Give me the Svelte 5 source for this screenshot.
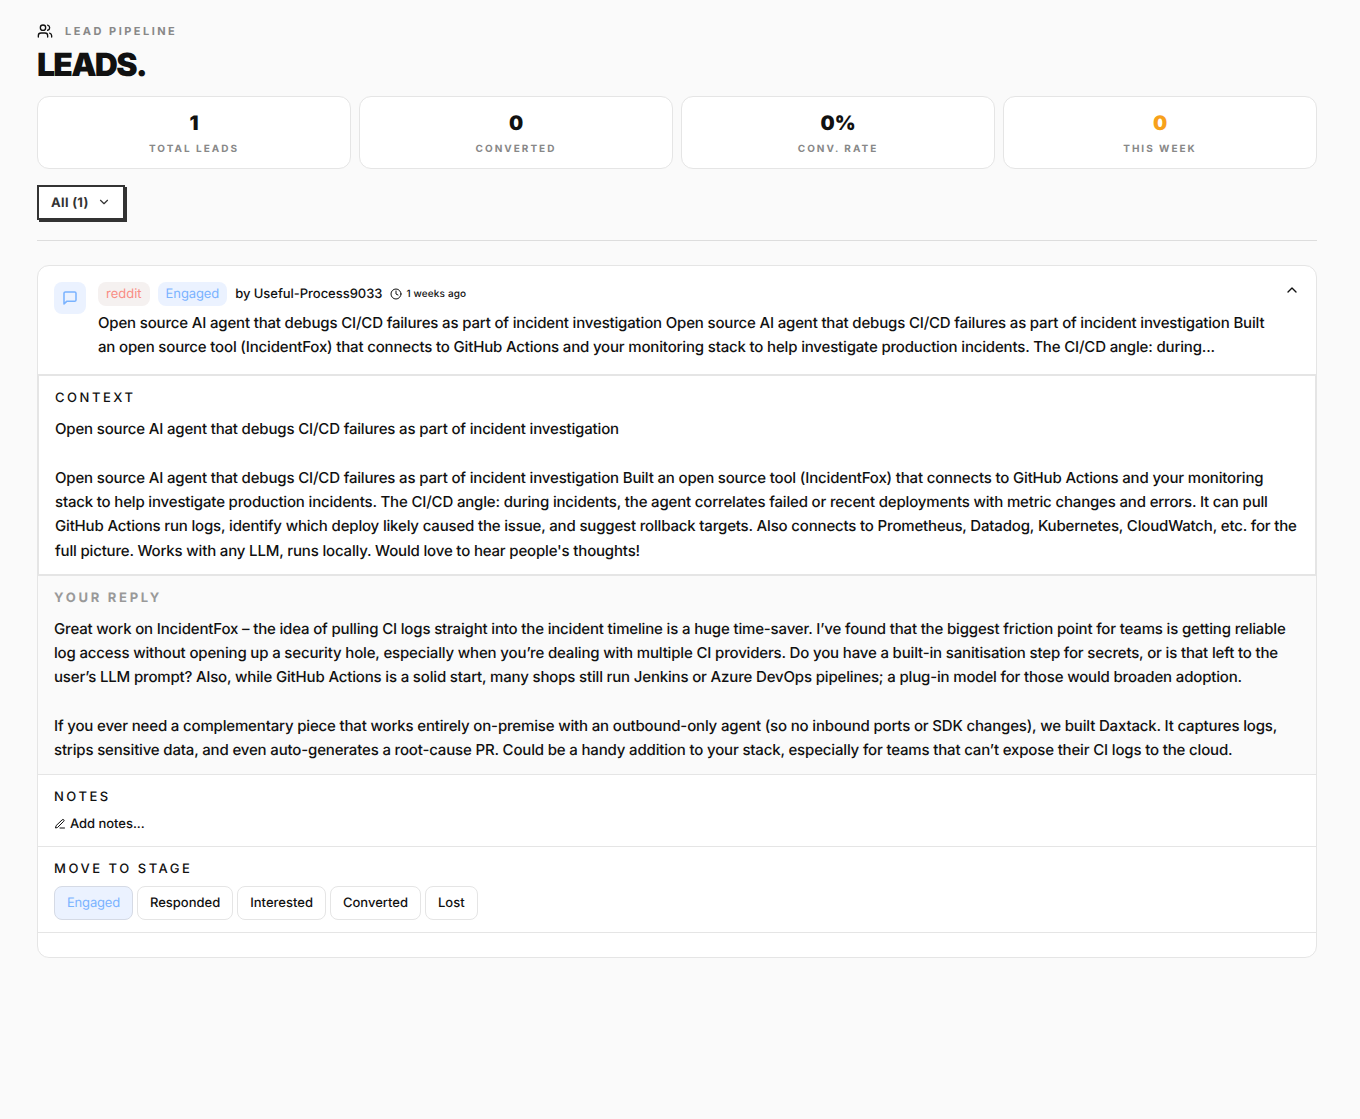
<script lang="ts">
	interface Stat {
		label: string;
		value: string;
		highlight?: boolean;
	}

	const stats: Stat[] = [
		{ label: 'Total leads', value: '1' },
		{ label: 'Converted', value: '0' },
		{ label: 'Conv. rate', value: '0%' },
		{ label: 'This week', value: '0', highlight: true }
	];

	const stages = ['Engaged', 'Responded', 'Interested', 'Converted', 'Lost'];

	const title = 'Open source AI agent that debugs CI/CD failures as part of incident investigation';

	const lead = {
		platform: 'reddit',
		author: 'Useful-Process9033',
		age: '1 weeks ago',
		preview: `${title} ${title} Built an open source tool (IncidentFox) that connects to GitHub Actions and your monitoring stack to help investigate production incidents. The CI/CD angle: during...`,
		context: `${title}\n\n${title} Built an open source tool (IncidentFox) that connects to GitHub Actions and your monitoring stack to help investigate production incidents. The CI/CD angle: during incidents, the agent correlates failed or recent deployments with metric changes and errors. It can pull GitHub Actions run logs, identify which deploy likely caused the issue, and suggest rollback targets. Also connects to Prometheus, Datadog, Kubernetes, CloudWatch, etc. for the full picture. Works with any LLM, runs locally. Would love to hear people's thoughts!`,
		reply: `Great work on IncidentFox – the idea of pulling CI logs straight into the incident timeline is a huge time-saver. I’ve found that the biggest friction point for teams is getting reliable log access without opening up a security hole, especially when you’re dealing with multiple CI providers. Do you have a built-in sanitisation step for secrets, or is that left to the user’s LLM prompt? Also, while GitHub Actions is a solid start, many shops still run Jenkins or Azure DevOps pipelines; a plug-in model for those would broaden adoption.\n\nIf you ever need a complementary piece that works entirely on-premise with an outbound-only agent (so no inbound ports or SDK changes), we built Daxtack. It captures logs, strips sensitive data, and even auto-generates a root-cause PR. Could be a handy addition to your stack, especially for teams that can’t expose their CI logs to the cloud.`
	};

	let stage = $state('Engaged');
	let expanded = $state(true);
</script>

<main class="page">
	<header class="page-header">
		<div class="eyebrow">
			<svg class="icon" width="16" height="16" viewBox="0 0 24 24">
				<path d="M16 21v-2a4 4 0 0 0-4-4H6a4 4 0 0 0-4 4v2" />
				<circle cx="9" cy="7" r="4" />
				<path d="M22 21v-2a4 4 0 0 0-3-3.87" />
				<path d="M16 3.13a4 4 0 0 1 0 7.75" />
			</svg>
			<span class="eyebrow__text">Lead pipeline</span>
		</div>
		<h1>LEADS.</h1>
	</header>

	<section class="stats">
		{#each stats as stat}
			<div class="stat">
				<div class="stat__value" class:stat__value--highlight={stat.highlight}>{stat.value}</div>
				<div class="stat__label">{stat.label}</div>
			</div>
		{/each}
	</section>

	<div class="filters">
		<button class="filter">
			<span class="filter__label">All (1)</span>
			<svg class="icon" width="14" height="14" viewBox="0 0 24 24"><path d="m6 9 6 6 6-6" /></svg>
		</button>
	</div>

	<article class="lead">
		<div class="lead__summary">
			<div class="lead__avatar">
				<svg class="icon" width="16" height="16" viewBox="0 0 24 24">
					<path d="M21 15a2 2 0 0 1-2 2H7l-4 4V5a2 2 0 0 1 2-2h14a2 2 0 0 1 2 2z" />
				</svg>
			</div>
			<div class="lead__main">
				<div class="lead__meta">
					<span class="tag tag--platform">{lead.platform}</span>
					<span class="tag tag--stage">{stage}</span>
					<span class="lead__author">by {lead.author}</span>
					<span class="lead__age">
						<svg class="icon" width="12" height="12" viewBox="0 0 24 24">
							<circle cx="12" cy="12" r="10" />
							<path d="M12 6v6l4 2" />
						</svg>
						{lead.age}
					</span>
				</div>
				<p class="lead__text">{lead.preview}</p>
			</div>
			<button class="toggle" aria-label="Toggle details" onclick={() => (expanded = !expanded)}>
				<svg class="icon" width="16" height="16" viewBox="0 0 24 24"><path d="m18 15-6-6-6 6" /></svg>
			</button>
		</div>

		{#if expanded}
			<div class="details">
				<section class="block block--context">
					<h2>Context</h2>
					<p class="lead__text">{lead.context}</p>
				</section>
				<section class="block block--reply">
					<h2>Your reply</h2>
					<p class="lead__text">{lead.reply}</p>
				</section>
				<section class="block">
					<h2>Notes</h2>
					<button class="add-notes">
						<svg class="icon" width="12" height="12" viewBox="0 0 24 24">
							<path d="M12 20h9" />
							<path d="M16.5 3.5a2.12 2.12 0 0 1 3 3L7 19l-4 1 1-4Z" />
						</svg>
						<span class="add-notes__label">Add notes...</span>
					</button>
				</section>
				<section class="block">
					<h2>Move to stage</h2>
					<div class="stages">
						{#each stages as name}
							<button class="stage" class:stage--active={name === stage} onclick={() => (stage = name)}>
								{name}
							</button>
						{/each}
					</div>
				</section>
				<div class="block block--footer"></div>
			</div>
		{/if}
	</article>
</main>

<style>
	:global(body) {
		margin: 0;
		background: #fafafa;
	}

	.page {
		box-sizing: border-box;
		width: 1280px;
		margin-left: 37px;
		padding-top: 21px;
		font-family: Inter, sans-serif;
		font-size: 13px;
		font-weight: 500;
		line-height: 1.5;
		color: #111;
		text-rendering: geometricPrecision;
	}

	button {
		font: inherit;
		color: inherit;
		text-rendering: inherit;
		cursor: pointer;
	}

	h1,
	h2,
	p {
		margin: 0;
	}

	.icon {
		display: block;
		flex-shrink: 0;
		fill: none;
		stroke: currentColor;
		stroke-width: 2;
		stroke-linecap: round;
		stroke-linejoin: round;
	}

	.eyebrow {
		display: flex;
		align-items: center;
		gap: 12px;
		height: 20px;
	}

	.eyebrow__text {
		font-size: 11px;
		font-weight: 700;
		letter-spacing: 0.225em;
		text-transform: uppercase;
		color: #888;
	}

	h1 {
		margin-top: 6px;
		font-size: 32px;
		font-weight: 900;
		line-height: 35px;
		letter-spacing: -0.055em;
	}

	.stats {
		display: grid;
		grid-template-columns: repeat(4, 1fr);
		gap: 8px;
		margin-top: 14px;
	}

	.stat {
		box-sizing: border-box;
		height: 73px;
		padding-top: 12px;
		border: 1px solid #e5e5e5;
		border-radius: 12px;
		background: #fff;
		text-align: center;
	}

	.stat__value {
		font-size: 20px;
		font-weight: 900;
		line-height: 28px;
	}

	.stat__value--highlight {
		color: #f7a11b;
	}

	.stat__label {
		margin-top: 5px;
		font-size: 10px;
		font-weight: 700;
		line-height: 15px;
		letter-spacing: 0.2em;
		text-transform: uppercase;
		color: #888;
	}

	.filters {
		display: flex;
		margin-top: 16px;
		padding-bottom: 20px;
		border-bottom: 1px solid #ddd;
	}

	.filter {
		display: flex;
		align-items: center;
		gap: 8px;
		box-sizing: border-box;
		width: 88px;
		height: 35px;
		padding: 0 12px 1px;
		border: 2px solid #333;
		background: #fff;
		box-shadow: 2px 2px 0 #333;
		font-weight: 700;
		letter-spacing: 0.025em;
		color: #333;
		white-space: nowrap;
	}

	.filter__label {
		padding-top: 3px;
	}

	.lead {
		margin-top: 24px;
		border: 1px solid #e5e5e5;
		border-radius: 12px;
		background: #fff;
		overflow: hidden;
	}

	.lead__summary {
		display: flex;
		gap: 12px;
		box-sizing: border-box;
		height: 108px;
		padding: 16px;
	}

	.lead__avatar {
		display: flex;
		align-items: center;
		justify-content: center;
		flex-shrink: 0;
		width: 32px;
		height: 32px;
		border-radius: 8px;
		background: #ebf2ff;
		color: #7ab3ff;
	}

	.lead__avatar .icon {
		stroke-width: 2.3;
	}

	.lead__main {
		flex: 1;
		min-width: 0;
	}

	.lead__meta {
		display: flex;
		align-items: center;
		gap: 8px;
		height: 24px;
		margin-bottom: 5px;
	}

	.tag {
		padding: 2px 8px;
		border-radius: 8px;
		line-height: 20px;
		font-weight: 400;
	}

	.tag--platform {
		background: #f5f1f0;
		color: #f98e85;
	}

	.tag--stage {
		background: #ebf2ff;
		letter-spacing: -0.008em;
		color: #7ab3ff;
	}

	.lead__author {
		padding-top: 1px;
		letter-spacing: -0.003em;
	}

	.lead__age {
		display: flex;
		align-items: center;
		gap: 4px;
		font-size: 10px;
		letter-spacing: 0.015em;
	}

	.lead__text {
		font-size: 15px;
		line-height: 1.625;
		letter-spacing: -0.0112em;
		white-space: pre-line;
	}

	.toggle {
		align-self: flex-start;
		padding: 0;
		border: 0;
		background: none;
	}

	.details {
		border-top: 1px solid #e5e5e5;
	}

	.block {
		padding: 13px 16px 12px;
		border-top: 1px solid #e5e5e5;
	}

	.block:first-child {
		border: 1px solid #e5e5e5;
	}

	.block--context,
	.block--reply {
		padding-bottom: 10.75px;
	}

	.block--context h2,
	.block--reply h2 {
		margin-bottom: 8.25px;
	}

	.block--reply {
		background: #fafafa;
	}

	.block--reply .lead__text {
		letter-spacing: -0.0108em;
	}

	.block--footer {
		padding: 12px 16px;
	}

	h2 {
		margin-bottom: 7px;
		font-size: 13px;
		font-weight: 500;
		line-height: 19.5px;
		letter-spacing: 0.195em;
		text-transform: uppercase;
	}

	.block--reply h2 {
		font-weight: 700;
		letter-spacing: 0.21em;
		color: #999;
	}

	.add-notes {
		display: flex;
		align-items: center;
		gap: 4px;
		height: 19.5px;
		padding: 0;
		border: 0;
		background: none;
	}

	.add-notes__label {
		padding-top: 1px;
		letter-spacing: -0.003em;
	}

	.stages {
		display: flex;
		gap: 4px;
	}

	.stage {
		padding: 6.75px 12px 5.25px;
		border: 1px solid #e5e5e5;
		border-radius: 8px;
		background: #fff;
		letter-spacing: 0;
	}

	.stage--active {
		border-color: #d5dae5;
		background: #ebf2ff;
		font-weight: 400;
		letter-spacing: -0.015em;
		color: #7ab3ff;
	}
</style>
